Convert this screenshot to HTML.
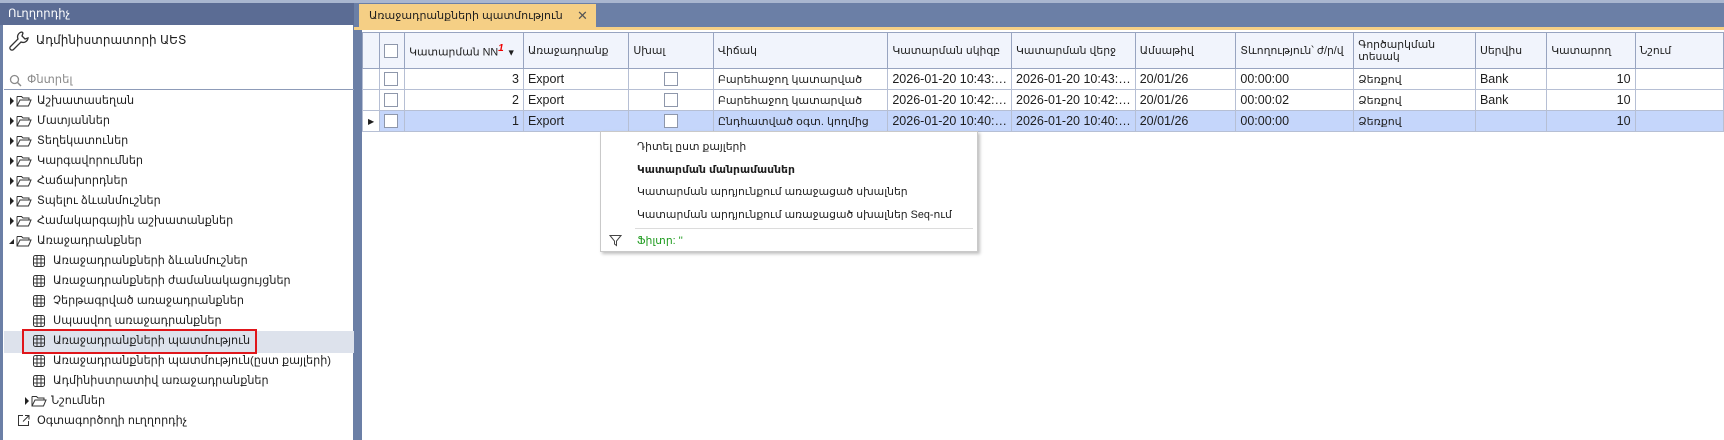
<!DOCTYPE html>
<html><head><meta charset="utf-8"><style>
*{margin:0;padding:0;box-sizing:border-box}
body{width:1724px;height:440px;overflow:hidden;background:#fff;font-family:"Liberation Sans","DejaVu Sans",sans-serif;font-size:12px;color:#1e1e1e;position:relative}
.a{position:absolute;white-space:nowrap}
.tree div{position:absolute;height:20px;line-height:20px;white-space:nowrap;font-size:11.2px}
.arr{position:absolute;width:0;height:0;border-top:4px solid transparent;border-bottom:4px solid transparent;border-left:4px solid #222;top:6px}
.fold{position:absolute;top:4px}
.grid table{border-collapse:collapse;table-layout:fixed;position:absolute;left:362px;top:32px}
.grid td{border:1px solid #b6bfd4;height:21px;padding:0 4px;overflow:hidden;white-space:nowrap;font-size:11px}
.grid td.l{font-size:12.5px}
.grid tr.h td{height:36px;background:#f1f4fc;border-color:#98a4c0;font-size:10.8px;line-height:12px}
.grid tr.sel td{background:#c5d6fb}
.cb{display:inline-block;width:14px;height:14px;border:1px solid #8e97ab;background:#fff;vertical-align:middle}
.r{text-align:right}
.menu div{position:absolute;left:36px;white-space:nowrap;font-size:10.8px}
</style></head><body>
<div class="a" style="left:0;top:0;width:354px;height:440px;background:#6b7fa6"></div>
<div class="a" style="left:0;top:0;width:354px;height:3px;background:#a9b6cf"></div>
<div class="a" style="left:0;top:3px;width:354px;height:22px;background:#5b6c94;color:#fff;font-size:11.5px;line-height:22px;padding-left:8px">Ուղղորդիչ</div>
<div class="a" style="left:3px;top:25px;width:350px;height:415px;background:#fff"></div>
<svg class="a" style="left:8px;top:30px" width="22" height="22" viewBox="0 0 22 22"><path d="M14 2a5 5 0 0 0-4 7L2.5 16.5a2 2 0 0 0 3 3L13 12a5 5 0 0 0 7-4l-3 1-3-3 1-3z" fill="none" stroke="#333" stroke-width="1.3"/></svg>
<div class="a" style="left:36px;top:33px;font-size:12px">Ադմինիստրատորի ԱԵՏ</div>
<svg class="a" style="left:9px;top:74px" width="13" height="13"><circle cx="5.5" cy="5.5" r="4" fill="none" stroke="#8a8a8a" stroke-width="1.3"/><path d="M8.5 8.5L12 12" stroke="#8a8a8a" stroke-width="1.4"/></svg>
<div class="a" style="left:27px;top:72px;color:#8a8a8a;font-size:11.5px">Փնտրել</div>
<div class="a" style="left:4px;top:89px;width:350px;height:1px;background:#8d9bb8"></div>
<div class="a" style="left:4px;top:331px;width:350px;height:22px;background:#dde2ec"></div>
<div class="a" style="left:22px;top:329px;width:235px;height:25px;border:2px solid #e0161b"></div>
<div class="tree">
<svg width="0" height="0" style="position:absolute"><defs><symbol id="f" viewBox="0 0 16 12"><path d="M1 1.5h4.5l1.5 1.5h6v2M1 1.5v9.5h11.5l2.5-6H4l-3 6" fill="none" stroke="#333" stroke-width="1"/></symbol><symbol id="g" viewBox="0 0 12 12"><rect x="0.5" y="0.5" width="11" height="11" rx="2" fill="none" stroke="#333"/><path d="M4 .5v11M8 .5v11M.5 4h11M.5 8h11" stroke="#333"/></symbol></defs></svg>
<div style="left:0;top:91px;width:350px"><i class="arr" style="left:10px"></i><svg class="fold" style="left:16px" width="16" height="12"><use href="#f"/></svg><span style="position:absolute;left:37px">Աշխատասեղան</span></div>
<div style="left:0;top:111px;width:350px"><i class="arr" style="left:10px"></i><svg class="fold" style="left:16px" width="16" height="12"><use href="#f"/></svg><span style="position:absolute;left:37px">Մատյաններ</span></div>
<div style="left:0;top:131px;width:350px"><i class="arr" style="left:10px"></i><svg class="fold" style="left:16px" width="16" height="12"><use href="#f"/></svg><span style="position:absolute;left:37px">Տեղեկատուներ</span></div>
<div style="left:0;top:151px;width:350px"><i class="arr" style="left:10px"></i><svg class="fold" style="left:16px" width="16" height="12"><use href="#f"/></svg><span style="position:absolute;left:37px">Կարգավորումներ</span></div>
<div style="left:0;top:171px;width:350px"><i class="arr" style="left:10px"></i><svg class="fold" style="left:16px" width="16" height="12"><use href="#f"/></svg><span style="position:absolute;left:37px">Հաճախորդներ</span></div>
<div style="left:0;top:191px;width:350px"><i class="arr" style="left:10px"></i><svg class="fold" style="left:16px" width="16" height="12"><use href="#f"/></svg><span style="position:absolute;left:37px">Տպելու ձևանմուշներ</span></div>
<div style="left:0;top:211px;width:350px"><i class="arr" style="left:10px"></i><svg class="fold" style="left:16px" width="16" height="12"><use href="#f"/></svg><span style="position:absolute;left:37px">Համակարգային աշխատանքներ</span></div>
<div style="left:0;top:231px;width:350px"><i style="position:absolute;left:9px;top:8px;border-left:5px solid transparent;border-bottom:5px solid #222"></i><svg class="fold" style="left:16px" width="16" height="12"><use href="#f"/></svg><span style="position:absolute;left:37px">Առաջադրանքներ</span></div>
<div style="left:0;top:251px"><svg class="fold" style="left:33px" width="12" height="12"><use href="#g"/></svg><span style="position:absolute;left:53px">Առաջադրանքների ձևանմուշներ</span></div>
<div style="left:0;top:271px"><svg class="fold" style="left:33px" width="12" height="12"><use href="#g"/></svg><span style="position:absolute;left:53px">Առաջադրանքների ժամանակացույցներ</span></div>
<div style="left:0;top:291px"><svg class="fold" style="left:33px" width="12" height="12"><use href="#g"/></svg><span style="position:absolute;left:53px">Չերթագրված առաջադրանքներ</span></div>
<div style="left:0;top:311px"><svg class="fold" style="left:33px" width="12" height="12"><use href="#g"/></svg><span style="position:absolute;left:53px">Սպասվող առաջադրանքներ</span></div>
<div style="left:0;top:331px"><svg class="fold" style="left:33px" width="12" height="12"><use href="#g"/></svg><span style="position:absolute;left:53px">Առաջադրանքների պատմություն</span></div>
<div style="left:0;top:351px"><svg class="fold" style="left:33px" width="12" height="12"><use href="#g"/></svg><span style="position:absolute;left:53px">Առաջադրանքների պատմություն(ըստ քայլերի)</span></div>
<div style="left:0;top:371px"><svg class="fold" style="left:33px" width="12" height="12"><use href="#g"/></svg><span style="position:absolute;left:53px">Ադմինիստրատիվ առաջադրանքներ</span></div>
<div style="left:0;top:391px;width:350px"><i class="arr" style="left:25px"></i><svg class="fold" style="left:31px" width="16" height="12"><use href="#f"/></svg><span style="position:absolute;left:51px">Նշումներ</span></div>
<div style="left:0;top:411px;width:350px"><svg class="fold" style="left:17px;top:3px" width="13" height="13"><path d="M6 1.5H1.5v10h10V7M8 1.5h4v4M12 1.5L6 7.5" fill="none" stroke="#333"/></svg><span style="position:absolute;left:37px">Օգտագործողի ուղղորդիչ</span></div>
</div>
<div class="a" style="left:354px;top:0;width:1370px;height:32px;background:#6b7fa6"></div>
<div class="a" style="left:354px;top:0;width:1370px;height:3px;background:#a9b6cf"></div>
<div class="a" style="left:354px;top:27px;width:1370px;height:3px;background:#f5cf85"></div>
<div class="a" style="left:354px;top:30px;width:8px;height:410px;background:#6b7fa6"></div>
<div class="a" style="left:359px;top:4px;width:237px;height:24px;background:#f5cf85;line-height:24px;padding-left:10px;font-size:11px">Առաջադրանքների պատմություն<span style="position:absolute;left:218px;color:#555;font-size:13px">✕</span></div>
<div class="a" style="left:362px;top:30px;width:1362px;height:410px;background:#fff"></div>
<div class="grid"><table>
<colgroup><col style="width:17px"><col style="width:25px"><col style="width:119px"><col style="width:106px"><col style="width:86px"><col style="width:175px"><col style="width:120px"><col style="width:119px"><col style="width:102px"><col style="width:118px"><col style="width:123px"><col style="width:72px"><col style="width:89px"><col style="width:90px"></colgroup>
<tr class="h"><td></td><td style="padding:0 4px"><span class="cb"></span></td><td>Կատարման NN<sup style="color:#e00;font-weight:bold;font-style:italic;font-size:10px">1</sup> <span style="font-size:9px">▼</span></td><td>Առաջադրանք</td><td>Սխալ</td><td>Վիճակ</td><td>Կատարման սկիզբ</td><td>Կատարման վերջ</td><td>Ամսաթիվ</td><td>Տևողություն՝ ժ/ր/վ</td><td style="white-space:normal">Գործարկման տեսակ</td><td>Սերվիս</td><td>Կատարող</td><td>Նշում</td></tr>
<tr><td></td><td><span class="cb"></span></td><td class="r l">3</td><td class="l">Export</td><td style="text-align:center"><span class="cb"></span></td><td>Բարեհաջող կատարված</td><td class="l">2026-01-20 10:43:…</td><td class="l">2026-01-20 10:43:…</td><td class="l">20/01/26</td><td class="l">00:00:00</td><td>Ձեռքով</td><td class="l">Bank</td><td class="r l">10</td><td></td></tr>
<tr><td></td><td><span class="cb"></span></td><td class="r l">2</td><td class="l">Export</td><td style="text-align:center"><span class="cb"></span></td><td>Բարեհաջող կատարված</td><td class="l">2026-01-20 10:42:…</td><td class="l">2026-01-20 10:42:…</td><td class="l">20/01/26</td><td class="l">00:00:02</td><td>Ձեռքով</td><td class="l">Bank</td><td class="r l">10</td><td></td></tr>
<tr class="sel"><td style="background:#fff;padding:0 5px;font-size:8px">▶</td><td><span class="cb"></span></td><td class="r l">1</td><td class="l">Export</td><td style="text-align:center"><span class="cb"></span></td><td>Ընդհատված օգտ. կողմից</td><td class="l">2026-01-20 10:40:…</td><td class="l">2026-01-20 10:40:…</td><td class="l">20/01/26</td><td class="l">00:00:00</td><td>Ձեռքով</td><td></td><td class="r l">10</td><td></td></tr>
</table></div>
<div class="a menu" style="left:600px;top:131px;width:378px;height:121px;background:#fff;border:1px solid #c9c9c9;box-shadow:2px 2px 3px rgba(0,0,0,.25)">
<div style="top:8px">Դիտել ըստ քայլերի</div>
<div style="top:31px;font-weight:bold">Կատարման մանրամասներ</div>
<div style="top:53px">Կատարման արդյունքում առաջացած սխալներ</div>
<div style="top:76px">Կատարման արդյունքում առաջացած սխալներ Seq-ում</div>
<i style="position:absolute;left:34px;top:96px;width:338px;height:1px;background:#dcdcdc"></i>
<svg style="position:absolute;left:8px;top:102px" width="13" height="13"><path d="M1 1.5h11L7.5 7v4.5L5.5 10V7z" fill="none" stroke="#444"/></svg>
<div style="top:102px;color:#1e9b1e">Ֆիլտր: ''</div>
</div>
</body></html>
